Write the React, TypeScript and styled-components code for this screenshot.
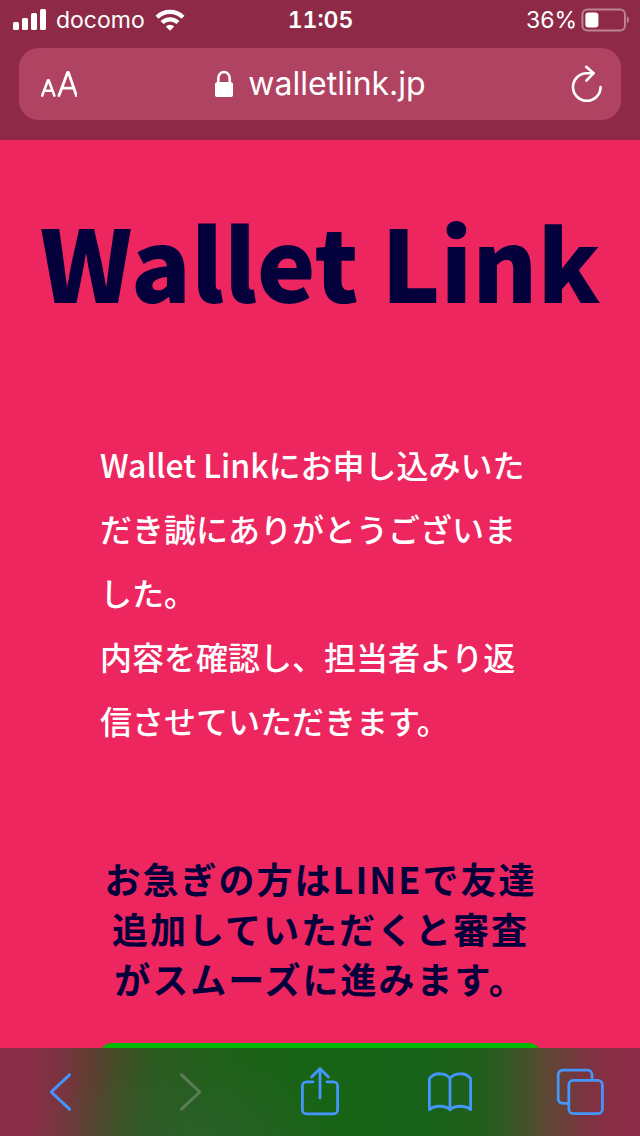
import React from "react";
import styled, { createGlobalStyle } from "styled-components";

const GlobalStyle = createGlobalStyle`
  *, *::before, *::after { box-sizing: border-box; }
  body { margin: 0; background: #ee2660; }
  button { font: inherit; color: inherit; background: none; border: 0; padding: 0; cursor: pointer; }
  svg { display: block; flex: none; }
`;

const Screen = styled.div`
  height: 100vh;
  display: flex;
  flex-direction: column;
  font-family: "Noto Sans CJK JP", sans-serif;
  background: #ee2660;
`;

const BrowserTop = styled.header`
  flex: none;
  padding-bottom: 20px;
  color: #fff;
  background: #8e2a47;
  font-family: Inter, sans-serif;
`;

const StatusBar = styled.div`
  height: 48px;
  padding: 0 11px 8px 12px;
  display: grid;
  grid-template-columns: 1fr auto 1fr;
  align-items: center;
  font-size: 23px;
  line-height: 32px;
`;

const StatusGroup = styled.div<{ $end?: boolean }>`
  display: flex;
  align-items: center;
  justify-content: ${(p) => (p.$end ? "flex-end" : "flex-start")};
  gap: ${(p) => (p.$end ? 4 : 10)}px;
`;

const Clock = styled.time`
  font-weight: 600;
  font-variant-numeric: tabular-nums;
`;

const AddressBar = styled.div`
  height: 72px;
  margin: 0 19px;
  padding: 0 18px;
  display: grid;
  grid-template-columns: 1fr auto 1fr;
  align-items: center;
  border-radius: 20px;
  background: #b14362;
`;

const BarButton = styled.button<{ $end?: boolean }>`
  justify-self: ${(p) => (p.$end ? "end" : "start")};
  display: flex;
  align-items: center;
`;

const Site = styled.button`
  display: flex;
  align-items: center;
  gap: 14px;
  font-size: 32px;
  line-height: 40px;
`;

const Main = styled.main`
  flex: 1;
  min-height: 0;
  overflow: hidden;
  padding-top: 48px;
`;

const Title = styled.h1`
  margin: 0;
  color: #04003c;
  font-size: 99px;
  font-weight: 900;
  line-height: 144px;
  text-align: center;
  white-space: nowrap;
`;

const Column = styled.div`
  margin: 100px 99px 0 100px;
`;

const Message = styled.p`
  margin: 0;
  color: #fff;
  font-size: 32px;
  font-weight: 500;
  line-height: 64px;
`;

const Notice = styled.h2`
  margin: 101px 0 40px;
  color: #04003c;
  font-size: 36px;
  font-weight: 700;
  line-height: 50px;
  letter-spacing: 2px;
  text-align: center;
`;

const LineLink = styled.a`
  display: block;
  height: 100px;
  border-radius: 12px;
  background: #00b900;
`;

const Toolbar = styled.nav`
  flex: none;
  height: 88px;
  padding: 0 30px;
  display: flex;
  align-items: center;
  justify-content: space-between;
  color: #4496fb;
  background:
    radial-gradient(ellipse 26% 90% at 31% 100%, rgba(50, 96, 52, 0.5), transparent),
    linear-gradient(90deg, #8b2c48 0%, #872e47 5%, #793440 10%, #5a402f 15%, #405024 19%, #2c5a20 24%, #1f611a 34%, #166414 50%, #18621a 68%, #235e1c 76%, #3d5427 81%, #604636 86%, #7a3540 91%, #8a2c46 96%, #8b2b48 100%);
`;

const ToolButton = styled.button`
  width: 60px;
  height: 60px;
  display: flex;
  align-items: center;
  justify-content: center;
  &:disabled { color: #5a7c56; }
`;

const SignalIcon = () => (
  <svg width="34" height="22" viewBox="0 0 34 22" fill="#fff">
    <rect x="1" y="13" width="6" height="8" rx="1.6" />
    <rect x="10" y="9" width="6" height="12" rx="1.6" />
    <rect x="19" y="4" width="6" height="17" rx="1.6" />
    <rect x="28" y="0" width="6" height="21" rx="1.6" />
  </svg>
);

const WifiIcon = () => (
  <svg width="30" height="22" viewBox="0 0 30 22" fill="none" stroke="#fff" strokeWidth="4.2">
    <path d="M2 8.2a18.6 18.6 0 0 1 26 0" />
    <path d="M7 13.6a11.4 11.4 0 0 1 16 0" />
    <path d="M10.8 17.4a6 6 0 0 1 8.4 0L15 21.8z" fill="#fff" stroke="none" />
  </svg>
);

const BatteryIcon = () => (
  <svg width="48" height="24" viewBox="0 0 48 24" fill="none">
    <rect x="1.4" y="1.4" width="42.6" height="21" rx="5" stroke="#bd8394" strokeWidth="2" />
    <path d="M46 8.2q2 1 2 3.6t-2 3.6z" fill="#bd8394" />
    <rect x="4.4" y="4.4" width="13" height="15" rx="3" fill="#fff" />
  </svg>
);

const TextSizeIcon = () => (
  <svg width="40" height="28" viewBox="-2 0 40 28" fill="none" stroke="#fff" strokeLinecap="round" strokeLinejoin="round">
    <path d="M3.2 25.6 9 10.2h.6l5.8 15.4M5.2 20.8h8.2" strokeWidth="2.6" />
    <path d="M20 25.6 28.6 2.4h.8L37.4 25.6M22.8 18.2h12.2" strokeWidth="2.8" />
  </svg>
);

const LockIcon = () => (
  <svg width="20" height="28" viewBox="0 0 20 28">
    <rect x="1" y="12" width="18" height="15" rx="2.6" fill="#fff" />
    <path d="M4.3 13V8.2a5.7 6.2 0 0 1 11.4 0V13" fill="none" stroke="#fff" strokeWidth="2.6" />
  </svg>
);

const ReloadIcon = () => (
  <svg width="34" height="38" viewBox="0 0 34 38" fill="none" stroke="#fff" strokeWidth="2.6" strokeLinecap="round" strokeLinejoin="round">
    <path d="M31.6 22A13.8 13.8 0 1 1 17.8 8.2h6.6" />
    <path d="M17.2 1.8 24.6 8.2l-7.2 7.4" />
  </svg>
);

const BackIcon = () => (
  <svg width="24" height="40" viewBox="-1 0 24 40" fill="none" stroke="currentColor" strokeWidth="3" strokeLinecap="round" strokeLinejoin="round">
    <path d="M20.5 2.8 2.2 20l18.3 17.2" />
  </svg>
);

const ForwardIcon = () => (
  <svg width="24" height="40" viewBox="0 0 24 40" fill="none" stroke="currentColor" strokeWidth="3" strokeLinecap="round" strokeLinejoin="round">
    <path d="M3.5 2.8 21.8 20 3.5 37.2" />
  </svg>
);

const ShareIcon = () => (
  <svg width="40" height="52" viewBox="0 0 40 52" fill="none" stroke="currentColor" strokeWidth="2.8" strokeLinecap="round" strokeLinejoin="round">
    <path d="M13 15.8H6.4a4 4 0 0 0-4 4v24a4 4 0 0 0 4 4h27.2a4 4 0 0 0 4-4v-24a4 4 0 0 0-4-4H27" />
    <path d="M20 32V2.6M11.6 11 20 2.6l8.4 8.4" />
  </svg>
);

const BookIcon = () => (
  <svg width="46" height="42" viewBox="0 0 46 42" fill="none" stroke="currentColor" strokeWidth="2.8" strokeLinejoin="round">
    <path d="M23 7.4C18.6 1.4 7.4 1 2.4 7.6v31C7.4 34 18.6 34.2 23 38.8c4.4-4.6 15.6-4.8 20.6-.2v-31C38.6 1 27.4 1.4 23 7.4z" />
    <path d="M23 7.4v31.4" />
  </svg>
);

const TabsIcon = () => (
  <svg width="48" height="48" viewBox="0 0 48 48" fill="none" stroke="currentColor" strokeWidth="2.8">
    <rect x="12.8" y="12.4" width="33.6" height="33.2" rx="4.4" />
    <path d="M12.8 35.4H6.6a4.400 4.400 0 0 1-4.400-4.400V6.600a4.400 4.400 0 0 1 4.400-4.400h25a4.400 4.400 0 0 1 4.400 4.400v5.800" />
  </svg>
);

export default function App() {
  return (
    <Screen lang="ja">
      <GlobalStyle />
      <BrowserTop>
        <StatusBar>
          <StatusGroup>
            <SignalIcon />
            <span>docomo</span>
            <WifiIcon />
          </StatusGroup>
          <Clock>11:05</Clock>
          <StatusGroup $end>
            <span>36%</span>
            <BatteryIcon />
          </StatusGroup>
        </StatusBar>
        <AddressBar>
          <BarButton aria-label="表示設定">
            <TextSizeIcon />
          </BarButton>
          <Site>
            <LockIcon />
            walletlink.jp
          </Site>
          <BarButton $end aria-label="再読み込み">
            <ReloadIcon />
          </BarButton>
        </AddressBar>
      </BrowserTop>
      <Main>
        <Title>Wallet Link</Title>
        <Column>
          <Message>
            Wallet Linkにお申し込みいただき誠にありがとうございました。
            <br />
            内容を確認し、担当者より返信させていただきます。
          </Message>
          <Notice>お急ぎの方はLINEで友達追加していただくと審査がスムーズに進みます。</Notice>
          <LineLink href="#line" aria-label="LINEで友達追加" />
        </Column>
      </Main>
      <Toolbar aria-label="ブラウザ操作">
        <ToolButton aria-label="戻る"><BackIcon /></ToolButton>
        <ToolButton aria-label="進む" disabled><ForwardIcon /></ToolButton>
        <ToolButton aria-label="共有"><ShareIcon /></ToolButton>
        <ToolButton aria-label="ブックマーク"><BookIcon /></ToolButton>
        <ToolButton aria-label="タブ"><TabsIcon /></ToolButton>
      </Toolbar>
    </Screen>
  );
}
